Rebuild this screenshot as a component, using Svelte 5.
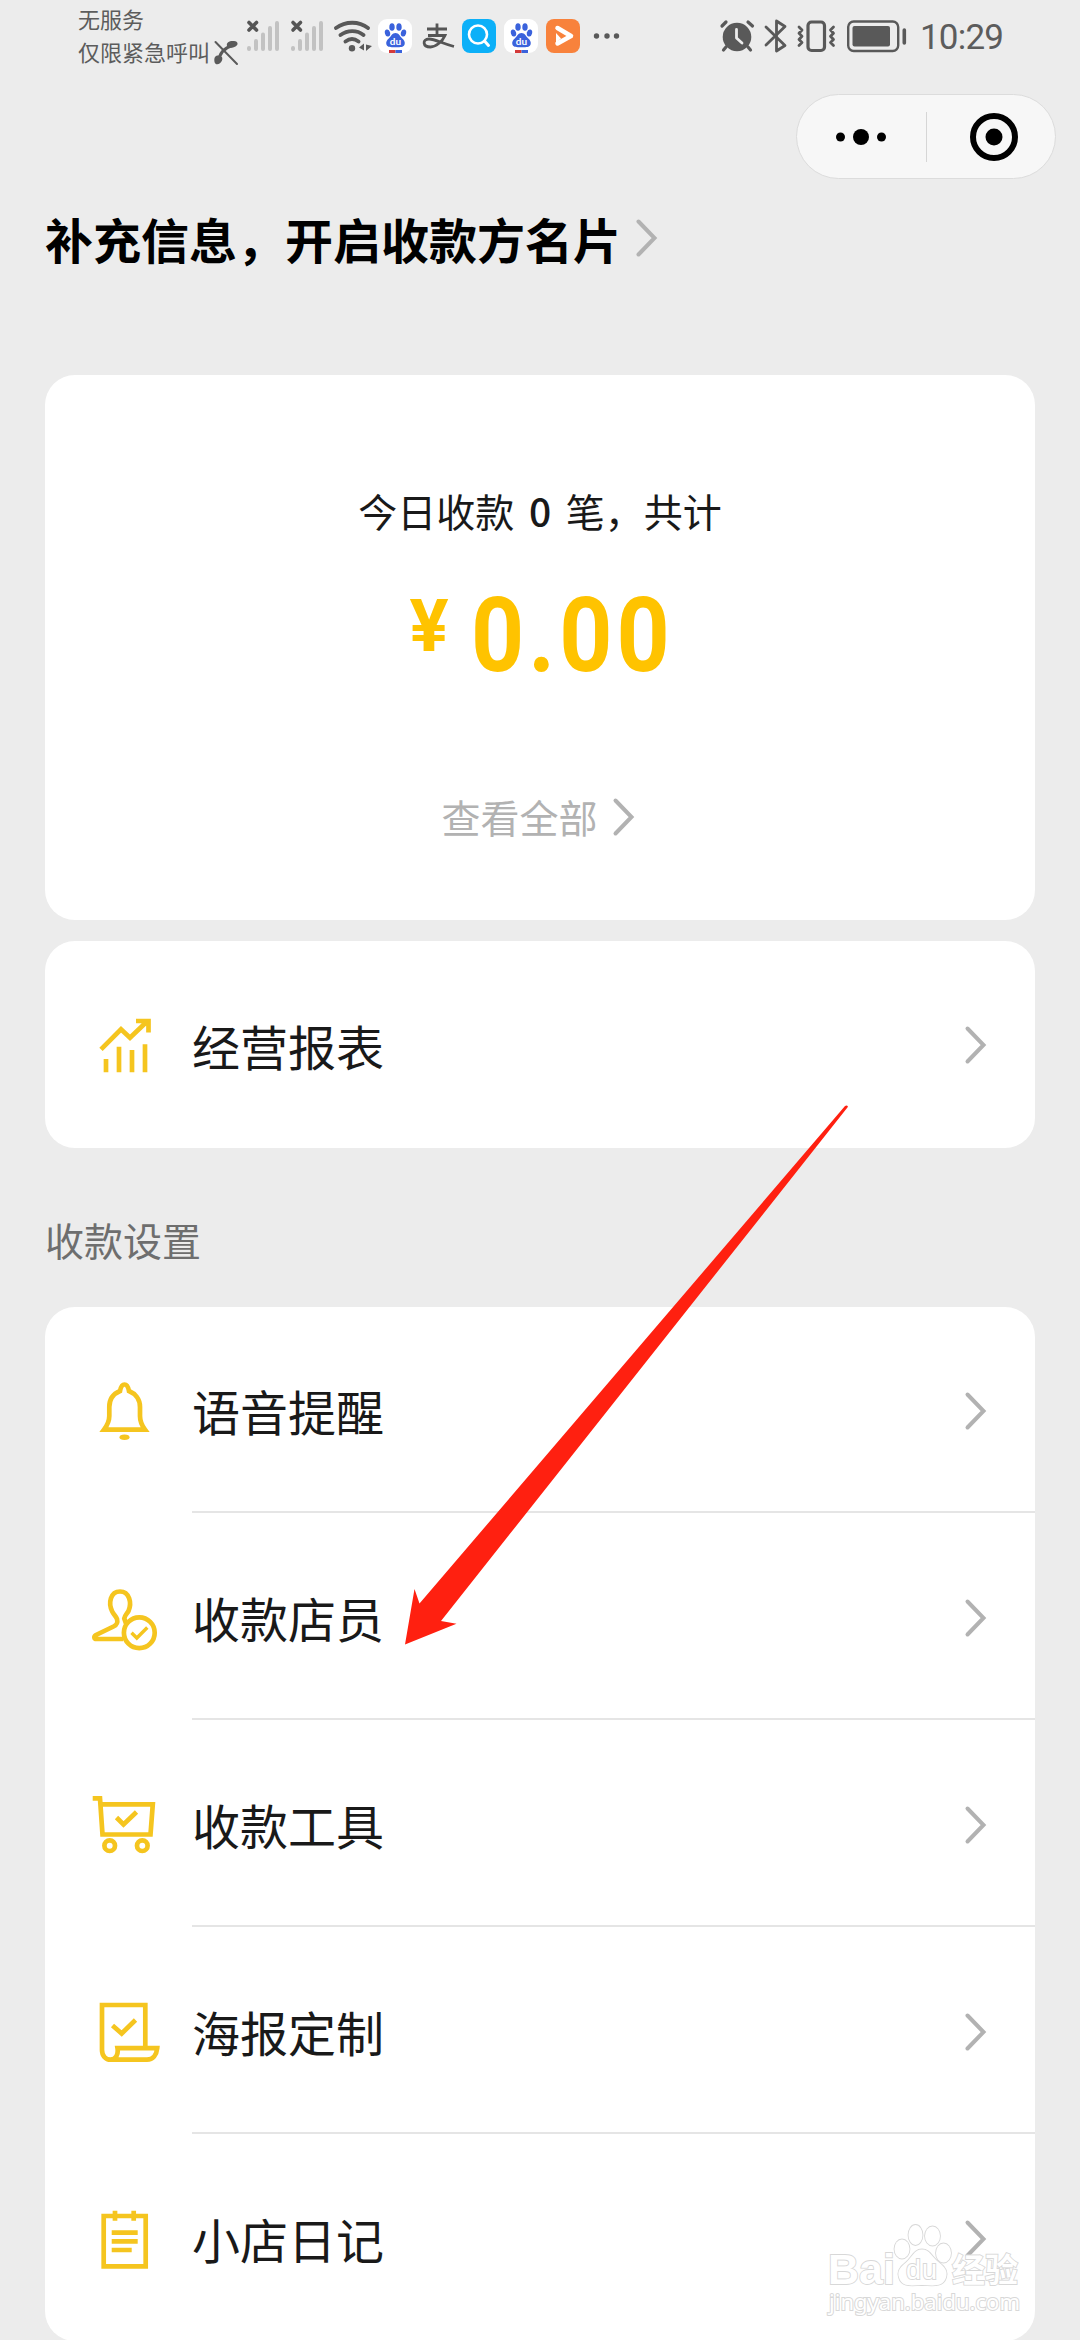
<script>
  const rows = [
    { label: '语音提醒', icon: 'bell' },
    { label: '收款店员', icon: 'clerk' },
    { label: '收款工具', icon: 'cart' },
    { label: '海报定制', icon: 'poster' },
    { label: '小店日记', icon: 'diary' }
  ];
</script>

{#snippet chevron()}
  <svg class="chevron" width="24" height="40" viewBox="0 0 24 40"><path d="M4.500 3.500 20.500 20 4.500 36.500" /></svg>
{/snippet}

{#snippet baidu()}
  <svg width="42" height="80" viewBox="0 0 42 80">
    <rect x="4" y="19" width="34" height="34" rx="9" fill="#fff" />
    <g fill="#3a62dc">
      <ellipse cx="13.500" cy="33" rx="2.600" ry="3.600" transform="rotate(-15 13.500 33)" />
      <ellipse cx="18" cy="27" rx="2.700" ry="3.800" />
      <ellipse cx="25" cy="27" rx="2.700" ry="3.800" />
      <ellipse cx="29.500" cy="33" rx="2.600" ry="3.600" transform="rotate(15 29.500 33)" />
      <path d="M21.500 33c-3.500 0-4 3-6.500 5.200-2 1.800-3.200 3.600-2.700 5.800.8 3.600 4.500 3.200 9.200 3.200s8.400.4 9.200-3.200c.5-2.200-.7-4-2.700-5.800C25.500 36 25 33 21.500 33z" />
    </g>
    <text class="du" x="21.500" y="44.500">du</text>
    <path d="M15 50h6.500v3H15z" fill="#d43a3a" /><path d="M21.500 50H28v3h-6.500z" fill="#3a62dc" />
  </svg>
{/snippet}

{#snippet signal()}
  <svg width="44" height="80" viewBox="0 0 44 80" stroke-linecap="round">
    <path d="M3 48v1M10 41v8M17 34.500v14.500M24 28v21M31 23v26" stroke="#c2c2c2" stroke-width="4" />
    <path d="m3 22.500 7.500 7.500m0-7.500L3 30" stroke="#555" stroke-width="3.600" />
  </svg>
{/snippet}

<div class="screen">
  <header class="status">
    <div class="carrier"><span>无服务</span><span>仅限紧急呼叫</span></div>
    <svg width="36" height="80" viewBox="210 0 36 80">
      <path d="M219 61c0-7 5-13 13-15.500" fill="none" stroke="#5a5a5a" stroke-width="3" />
      <path d="M214.500 62c-.8-5 1-6.500 4-6.500 3.500 0 4.500 2.500 3.500 5-1.500 4-6.500 5.500-7.500 1.500zM227 46c-1-4 3-5.500 7-5 4.500.5 4.500 4 1.500 5.500-3 1.600-7.500 2-8.500-.5z" fill="#5a5a5a" />
      <path d="m215.500 42 21.500 22" stroke="#5a5a5a" stroke-width="2" stroke-linecap="round" />
    </svg>
    {@render signal()}
    {@render signal()}
    <svg width="40" height="80" viewBox="334 0 40 80" fill="none" stroke="#595959" stroke-width="3.800" stroke-linecap="round">
      <path d="M336 28c9.500-7 23-7 32 0M340.500 35c7-5.200 16.500-5.200 23 0M345.500 41.500c4-3 9-3 13 0" />
      <circle cx="352" cy="48.300" r="3.200" fill="#595959" stroke="none" />
      <path d="m359 47.500 5-4v7zM366 44.500l6 1.500-6 5z" fill="#595959" stroke="none" />
    </svg>
    {@render baidu()}
    <svg width="42" height="80" viewBox="416 0 42 80" fill="none" stroke="#555" stroke-width="2.800">
      <path d="M427 29h20M437 23.500V35M428 35.500h17c-2.500 6-9.500 11.500-14.500 11.500-8 0-8.500-8-1.500-8 6 0 12 4 25 7.500" />
    </svg>
    <svg width="42" height="80" viewBox="0 0 42 80">
      <rect x="4" y="19" width="34" height="34" rx="8" fill="#0cb0f8" />
      <circle cx="20" cy="34.500" r="9" fill="none" stroke="#fff" stroke-width="2.600" />
      <path d="m26.500 41 4 4.500" stroke="#fff" stroke-width="3" stroke-linecap="round" />
    </svg>
    {@render baidu()}
    <svg width="42" height="80" viewBox="0 0 42 80">
      <rect x="4" y="19" width="34" height="34" rx="8" fill="#f8823c" />
      <path d="M15.500 28 29 36l-13.500 7.500" fill="none" stroke="#fff" stroke-width="4.500" stroke-linecap="round" stroke-linejoin="round" />
      <path d="M14 33v10l5-4.500z" fill="#fff" />
    </svg>
    <svg width="40" height="80" viewBox="584 0 40 80" fill="#595959"><circle cx="596.500" cy="36" r="2.700" /><circle cx="607" cy="36" r="2.700" /><circle cx="616.500" cy="36" r="2.700" /></svg>
    <div class="grow"></div>
    <svg width="198" height="80" viewBox="718 0 198 80" fill="none" stroke="#595959" stroke-linecap="round" stroke-linejoin="round">
      <circle cx="737" cy="37" r="14.300" fill="#595959" stroke="none" />
      <path d="m722 26 4-4M748 22l4.500 4M726 47l-2.500 3M748 47l2.500 3" stroke-width="3.200" />
      <path d="M736.500 29.500V38l5.500 5" stroke="#ececec" stroke-width="2.800" />
      <path d="m766 27 19 18.500-8.500 5.500V21l8.500 5.500L766 45" stroke-width="2.800" />
      <rect x="808" y="22" width="16.500" height="28.500" rx="3.500" stroke-width="3.200" />
      <path d="m799 27 3 3-3 3.200 3 3-3 3.300 3 3-3 3M833.500 27l-3 3 3 3.200-3 3 3 3.300-3 3 3 3" stroke-width="2.800" />
      <rect x="848.200" y="21.500" width="50" height="29.500" rx="5.500" stroke-width="2.400" />
      <rect x="852.500" y="26" width="37.500" height="20.500" rx="2" fill="#595959" stroke="none" />
      <path d="M904.300 30v13" stroke-width="3.600" />
    </svg>
    <time>10:29</time>
  </header>

  <nav class="nav">
    <div class="capsule">
      <svg width="129" height="83" viewBox="796 95 129 83"><circle cx="839.500" cy="137" r="4.500" /><circle cx="860" cy="137" r="8" /><circle cx="880.500" cy="137" r="4.500" /></svg>
      <i></i>
      <svg width="128" height="83" viewBox="926 95 128 83"><circle cx="993" cy="137" r="21" fill="none" stroke="#000" stroke-width="6" /><circle cx="993" cy="137" r="8.500" /></svg>
    </div>
  </nav>

  <h1>补充信息，开启收款方名片{@render chevron()}</h1>

  <main>
    <section class="card summary">
      <p class="today">今日收款 <b>0</b> 笔，共计</p>
      <div class="amount"><span class="yen">¥</span><span class="digits">0.00</span></div>
      <div class="all">查看全部{@render chevron()}</div>
    </section>

    <section class="card report">
      <svg class="icon" width="80" height="80" viewBox="0 0 80 80">
        <path d="m17 44.300 20-20 9 8.500L63 16.500M52 16h12.500v11.500M22 54v13.300M35 41.700v25.600M48 45v22.300M61 39.300v28" />
      </svg>
      <span class="label">经营报表</span>
      {@render chevron()}
    </section>

    <h2>收款设置</h2>

    <section class="card list">
      {#each rows as row}
        <div class="row">
          <svg class="icon" width="80" height="81" viewBox="0 0 80 81">
            {#if row.icon === 'bell'}
              <path d="M20 60.700h41c-3.500-4.700-5-8.700-5-13.700v-9c0-8-5-13.500-11-16-1-5-2.500-6.500-4.500-6.500S37 17 36 22c-6 2.500-10.700 8-10.700 16v9c0 5-1.800 9-5.300 13.700z" />
              <ellipse class="solid" cx="40.500" cy="68.300" rx="5" ry="2.700" />
            {:else if row.icon === 'clerk'}
              <path d="M39 63H12.500c-2.500 0-3-2.500-.5-4l17.500-8.500c3.500-1.800 4.500-3.500 3.500-7.500-1-3-3-4-4.800-7.500C24 27 26.500 15.500 36 15.500S48 27 44.500 35c-2 3.500-3.500 4-4.200 7.500l1.700 5" />
              <circle cx="55.300" cy="56.700" r="15.400" />
              <path d="m47.500 56.700 5.300 5.300 10.500-10.500" stroke-width="3.400" />
            {:else if row.icon === 'cart'}
              <path d="M8.700 15.300H16l2.500 36.200h48l2.300-30.200H17M32.500 34.500l7 7L52.500 29" />
              <circle cx="25.700" cy="62.700" r="5.300" /><circle cx="58.300" cy="62.700" r="5.300" />
            {:else if row.icon === 'poster'}
              <path d="M61.300 58V15H18v45c0 5.500 3.500 9.700 8.500 9.700H63c6 0 9.500-4.500 10.200-11.500H33.500c1 6-1.500 11.500-7 11.500M28.500 35.500l9.200 8L51.500 30" />
            {:else}
              <path d="M19.700 19h42v50.300h-42zM31 13.700v10M49.700 13.700v10M27.700 35.700h26M27.700 44.300h26M27.700 53h20" />
            {/if}
          </svg>
          <div class="body"><span class="label">{row.label}</span>{@render chevron()}</div>
        </div>
      {/each}
    </section>
  </main>

  <svg class="pointer" width="460" height="550" viewBox="395 1100 460 550">
    <path d="m405 1644.500 9.500-55.500 5 14.500 425.500-497.500q2-1.500 3 .8L441 1621l15.500 2.700z" />
  </svg>

  <svg class="watermark" width="210" height="110" viewBox="820 2220 210 110">
    <text class="brand" x="828" y="2284" textLength="67">Bai</text>
    <ellipse cx="902" cy="2249" rx="7.500" ry="9.500" /><ellipse cx="915.500" cy="2235" rx="7" ry="10" />
    <ellipse cx="932.500" cy="2236" rx="7.500" ry="9.500" /><ellipse cx="943.500" cy="2253" rx="7.500" ry="9.500" />
    <path d="M922 2249.500c-8 0-10 8-16 13-6 4.500-9 9-7 15 3 10.500 14 7.500 23 7.500s21 3 24-7.500c2-6-1-10.500-7-15-7-5-9-13-17-13z" />
    <text class="paw" x="906" y="2279" textLength="31">du</text>
    <text class="cn" x="952" y="2282" textLength="66">经验</text>
    <text class="url" x="829" y="2310" textLength="191">jingyan.baidu.com</text>
  </svg>
</div>

<style>
  :global(body) { background: #ececec; }
  .screen {
    position: relative;
    width: 1080px;
    height: 2340px;
    overflow: hidden;
    background: #ececec;
    color: #191919;
    font-family: "Noto Sans CJK SC", "Noto Sans", sans-serif;
  }
  svg { display: block; flex: none; }
  .status { display: flex; height: 80px; padding-left: 78px; color: #5c5c5c; }
  .carrier { width: 132px; padding-top: 2px; display: flex; flex-direction: column; font-size: 22px; line-height: 33px; white-space: nowrap; }
  .grow { flex: 1; }
  .du { font: 700 10px Lato, sans-serif; fill: #fff; text-anchor: middle; }
  time { width: 164px; padding-left: 4px; box-sizing: border-box; font: 400 35px/76px Roboto, sans-serif; letter-spacing: -0.8px; }
  .nav { display: flex; justify-content: flex-end; padding: 14px 24px 0 0; }
  .capsule { display: flex; align-items: center; height: 83px; border: 1px solid #dcdcdc; border-radius: 43px; background: #f7f7f7; }
  .capsule i { width: 1px; height: 50px; background: #d6d6d6; }
  .chevron { fill: none; stroke: #b2b2b2; stroke-width: 4; stroke-linecap: round; }
  h1 { display: flex; align-items: center; height: 60px; margin: 29px 0 107px; padding-left: 45px; font-size: 48px; line-height: 60px; font-weight: 700; color: #000; }
  h1 .chevron { margin: -1px 0 0 13px; }
  main { padding: 0 45px; }
  .card { background: #fff; border-radius: 30px; }
  .summary { height: 545px; display: flex; flex-direction: column; align-items: center; }
  .today { margin: 105px 0 0; font-size: 39px; line-height: 60px; word-spacing: 6px; }
  .today b { font-weight: 500; }
  .amount { display: flex; align-items: flex-start; margin-top: 36px; height: 120px; font: 700 103px/120px Roboto, sans-serif; color: #ffc300; }
  .yen { width: 42px; margin-right: 19px; font-size: 73px; line-height: 101px; }
  .digits { width: 200px; letter-spacing: 4.5px; transform: scaleX(0.9); transform-origin: left; }
  .all { display: flex; align-items: center; gap: 13px; margin: 90px 4px 0 0; font-size: 39px; line-height: 60px; color: #b2b2b2; }
  .all .chevron { margin-top: 2px; }
  .report { display: flex; align-items: center; height: 207px; margin-top: 21px; padding: 0 48px 0 39px; }
  .icon { fill: none; stroke: #f5c51f; stroke-width: 4.700; }
  .icon .solid { fill: #f5c51f; stroke: none; }
  .report .label { flex: 1; margin-left: 28px; }
  .label { font-size: 48px; line-height: 70px; }
  h2 { margin: 66px 0 43px; font-size: 39px; line-height: 50px; font-weight: 400; color: #6e6e6e; }
  .row { display: flex; align-items: center; height: 207px; padding-left: 39px; }
  .row:first-child { height: 206px; }
  .row .icon { margin-top: -1px; }
  .body { flex: 1; display: flex; align-items: center; justify-content: space-between; box-sizing: border-box; height: 100%; margin-left: 28px; padding: 2px 48px 0 0; border-bottom: 2px solid #e5e5e5; }
  .body .chevron { margin-top: 2px; }
  .row:last-child .body { border-color: transparent; }
  .pointer { position: absolute; left: 395px; top: 1100px; fill: #ff2010; }
  .watermark { position: absolute; left: 820px; top: 2220px; fill: #fff; stroke: #d8d8d8; stroke-width: 1.8; paint-order: stroke; }
  .brand { font: 700 43px "Liberation Sans", sans-serif; }
  .paw { font: 400 27px "Liberation Sans", sans-serif; }
  .cn { font: 700 33px "Noto Sans CJK SC", sans-serif; }
  .url { font: 400 22px "Noto Sans", sans-serif; stroke-width: 2; }
</style>
